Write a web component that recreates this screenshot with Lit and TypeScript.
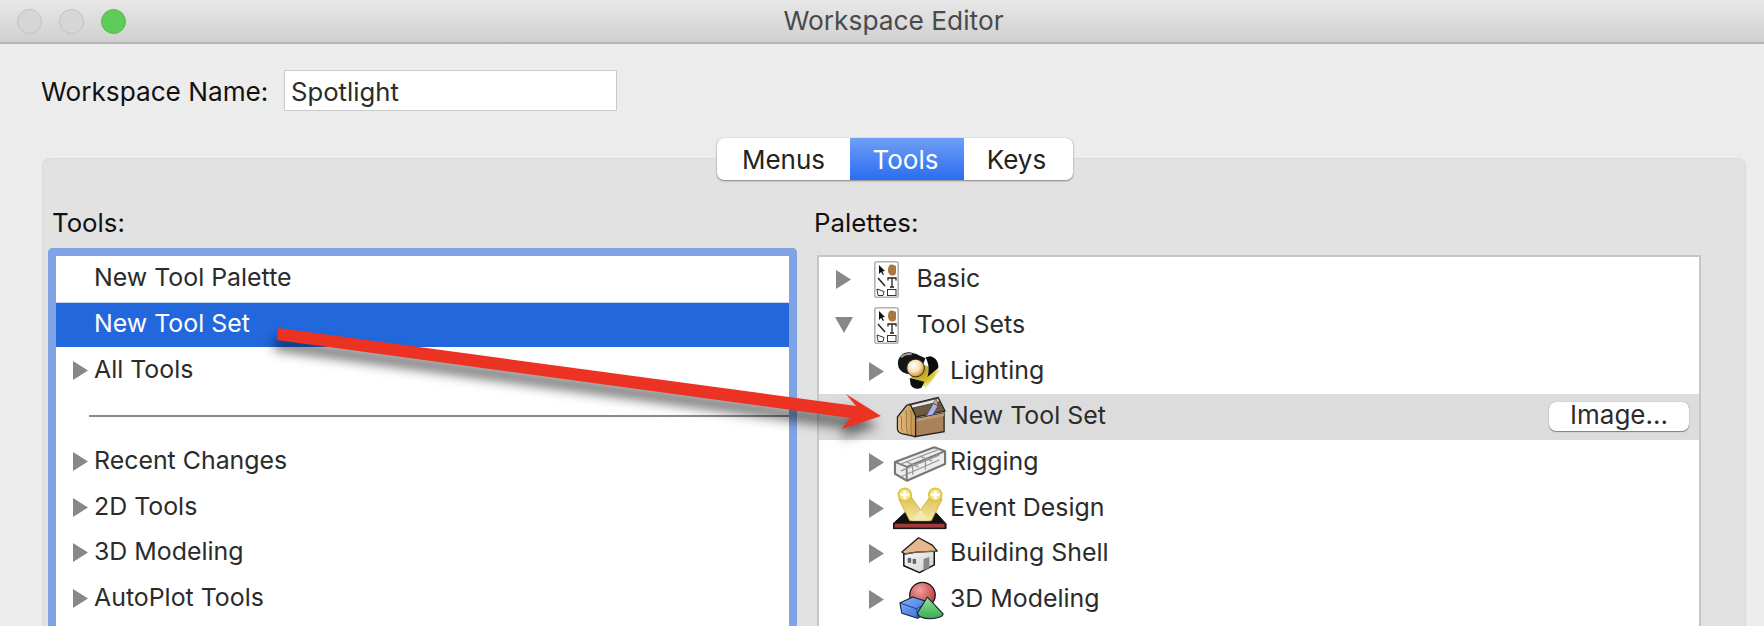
import { LitElement, html, css, svg } from "lit";
import { customElement } from "lit/decorators.js";

const doc = svg`<svg class="doc" width="25" height="37" viewBox="0 0 25 37">
<rect x=".8" y=".8" width="23.4" height="35.4" rx="2" fill="#fff" stroke="#b2b2b2" stroke-width="1.6"/>
<path d="M5 4l0 9 2-2 2 3 1-.6-1.7-3 2.700-.4z" fill="#111"/>
<path d="M14 9c0-3 1-5.500 3-5.500s1.500 0 2.500.5 2.500 0 2.500 1.500v5c0 3-1 4-3.500 4s-4.500-2-4.500-5.500z" fill="#a9773f"/>
<path d="M4 17l7 8" stroke="#222" stroke-width="1.500"/>
<path d="M14 19.500V17h8v2.500M18 17v9M16 26h4" fill="none" stroke="#222" stroke-width="1.300"/>
<path d="M3 28l7 2.500-1 4H4z" fill="none" stroke="#333"/>
<rect x="13.500" y="28.500" width="8.500" height="6" fill="none" stroke="#333"/></svg>`;

const tri = (down = false) =>
  down
    ? svg`<svg class="tri" width="18" height="16" viewBox="0 0 18 16"><path d="M0 0h18L9 16z" fill="#888"/></svg>`
    : svg`<svg class="tri" width="15" height="19" viewBox="0 0 15 19"><path d="M0 0l15 9.500L0 19z" fill="#888"/></svg>`;

const lighting = svg`<svg class="ic" width="58" height="46" viewBox="0 0 58 46">
<defs><radialGradient id="glow" cx=".3" cy=".35" r=".8"><stop offset="0" stop-color="#a8941a"/><stop offset=".6" stop-color="#d8c93a"/><stop offset="1" stop-color="#f7f1b0" stop-opacity=".35"/></radialGradient>
<radialGradient id="lens" cx=".4" cy=".35" r=".7"><stop offset="0" stop-color="#fff"/><stop offset=".5" stop-color="#f6e2b8"/><stop offset="1" stop-color="#d07f1c"/></radialGradient></defs>
<path d="M22 14l26 8-14 18-16-8z" fill="url(#glow)"/>
<path d="M33 9l5-1c5 1 9 6 8 12l-11 9c2-6 2-13-2-20z" fill="#0b0b0b"/>
<path d="M17 30l15 4-3 6c-4 2-9 1-11-3z" fill="#0e0e0e"/>
<circle cx="16" cy="15" r="11" fill="#151515"/>
<path d="M8 9c3-3 7-4 11-3" stroke="#9a9a9a" stroke-width="2" fill="none"/>
<path d="M22 5l11 5-3 8-12-4z" fill="#111"/>
<circle cx="23" cy="20" r="9" fill="url(#lens)" stroke="#2a2a2a" stroke-width="1"/></svg>`;

const toolbox = svg`<svg class="ic" width="58" height="46" viewBox="0 0 58 46">
<defs><linearGradient id="wd" x1="0" y1="0" x2="1" y2="0"><stop offset="0" stop-color="#e2bd80"/><stop offset="1" stop-color="#c29654"/></linearGradient></defs>
<path d="M17 10L46 3l7 14-30 6z" fill="#6e5a3f" stroke="#222" stroke-width="1.200"/>
<path d="M17 11L46 4l1.500 3.500-28 6.500z" fill="#e8e8e8" stroke="#333" stroke-width=".8"/>
<path d="M32 25l9-16 5 2.500-8 14z" fill="#a9b0ee" stroke="#444" stroke-width=".8"/>
<path d="M41 9l3-5 2 7.500z" fill="#d8b48a" stroke="#333" stroke-width=".6"/>
<path d="M22 25l30-6v19l-30 5z" fill="#a9825a" stroke="#222" stroke-width="1.300"/>
<path d="M22 25l30-6v3l-30 6z" fill="#bd9a72"/>
<path d="M4.500 23L14 11c2-1 3-1 4 0l5 11v21l-14-3c-3-1-4.500-3-4.500-5z" fill="url(#wd)" stroke="#222" stroke-width="1.300" stroke-linejoin="round"/>
<path d="M8 22c2 6-1 10 2 16M13 16c2 8-1 14 2 24M18 16c2 8-1 16 1 25" fill="none" stroke="#a3763a" stroke-width="1"/></svg>`;

const rigging = svg`<svg class="ic" width="58" height="46" viewBox="0 0 58 46" fill="none" stroke="#777">
<path d="M2 23L42 8l11 4v13L14 42 2 35z" fill="#ececec" stroke-width="2.200" stroke-linejoin="round"/>
<path d="M2 23l12 5L53 12M14 28v14" stroke-width="1.800"/>
<path d="M8 25L47 10M8 32l39-16M20 25v11M33 20v11M8 38L47 21M27 17l13 5M14 23l12 5" stroke-width="1.200" stroke="#959595"/></svg>`;

const eventDesign = svg`<svg class="ic" width="58" height="46" viewBox="0 0 58 46">
<defs><linearGradient id="bm" x1="0" y1="0" x2="0" y2="1"><stop offset="0" stop-color="#d9b93c"/><stop offset="1" stop-color="#f6e8a8"/></linearGradient></defs>
<path d="M14 26h28l12 13v5H0v-5z" fill="#111" stroke="#111" stroke-linejoin="round"/>
<rect x="1.500" y="39" width="51" height="4" fill="#a23a3a"/>
<path d="M6 14l9-7 13 18 13-18 9 7-11 22H17z" fill="url(#bm)" stroke="#c9a72c" stroke-width=".8"/>
<path d="M19 36l9-11 9 11z" fill="#f4e8b6"/>
<circle cx="12" cy="9.500" r="6.500" fill="#f4e59a" stroke="#e0c540" stroke-width="1.800"/>
<circle cx="43" cy="9.500" r="6.500" fill="#f4e59a" stroke="#e0c540" stroke-width="1.800"/>
<path d="M8 9.500h8M12 5.500v8M39 9.500h8M43 5.500v8" stroke="#fff" stroke-width="2.600"/></svg>`;

const house = svg`<svg class="ic" width="58" height="46" viewBox="0 0 58 46">
<defs><linearGradient id="wl" x1="0" y1="0" x2="1" y2="1"><stop offset="0" stop-color="#fff"/><stop offset="1" stop-color="#d0d0d0"/></linearGradient></defs>
<path d="M11 22v13l16 7 15-8V21L27 12z" fill="url(#wl)" stroke="#111" stroke-width="1.500" stroke-linejoin="round"/>
<path d="M26 6.500L9 21l3 2 12-2 21-1-5-6z" fill="#e6b88e" stroke="#1a1a1a" stroke-width="1.300" stroke-linejoin="round"/>
<path d="M12 23l12-2 19-1" stroke="#8a6a44" stroke-width="1.200" fill="none"/>
<rect x="15" y="27" width="3.500" height="5" fill="#666"/><rect x="20" y="28" width="3.500" height="5" fill="#666"/>
<path d="M31 28l6-2v11l-6 3z" fill="#888"/></svg>`;

const solid = svg`<svg class="ic" width="58" height="46" viewBox="0 0 58 46">
<defs><radialGradient id="sp" cx=".4" cy=".3" r=".8"><stop offset="0" stop-color="#f0a0a0"/><stop offset="1" stop-color="#b52a2a"/></radialGradient>
<linearGradient id="bx" x1="0" y1="0" x2="1" y2="1"><stop offset="0" stop-color="#86b4f4"/><stop offset="1" stop-color="#2f66d8"/></linearGradient>
<linearGradient id="cn" x1="0" y1="0" x2="0" y2="1"><stop offset="0" stop-color="#8fe59a"/><stop offset="1" stop-color="#3ba850"/></linearGradient></defs>
<circle cx="30" cy="18" r="13" fill="url(#sp)" stroke="#111" stroke-width="1.200"/>
<path d="M7 26l13-6 16 5-1 10-10 6.500-16-5z" fill="url(#bx)" stroke="#123" stroke-width="1.100" stroke-linejoin="round"/>
<path d="M7 26l17 6 12-7M24 32l1 9.500" fill="none" stroke="#1d3f90" stroke-width="1"/>
<path d="M35 20L25 36c0 4 6 6 13 6s13-2 13-5z" fill="url(#cn)" stroke="#123" stroke-width="1.100" stroke-linejoin="round"/></svg>`;

const leftRows: [string, boolean, string?][] = [
  ["New Tool Palette", false],
  ["New Tool Set", false, "sel"],
  ["All Tools", true],
  ["", false, "sep"],
  ["Recent Changes", true],
  ["2D Tools", true],
  ["3D Modeling", true],
  ["AutoPlot Tools", true],
];

const nested = [
  { t: "Lighting", i: lighting, tri: true },
  { t: "New Tool Set", i: toolbox, tri: false, on: true },
  { t: "Rigging", i: rigging, tri: true },
  { t: "Event Design", i: eventDesign, tri: true },
  { t: "Building Shell", i: house, tri: true },
  { t: "3D Modeling", i: solid, tri: true },
];

@customElement("app-root")
export class AppRoot extends LitElement {
  static styles = css`
    :host { display: block; width: 1764px; height: 626px; overflow: hidden; position: relative;
      font-family: "Inter", "Liberation Sans", sans-serif; color: #222; background: #ececec; }
    * { box-sizing: border-box; }
    .title { height: 44px; background: linear-gradient(#e8e8e8, #d0d0d0); border-bottom: 2px solid #b4b4b4;
      display: flex; align-items: center; position: relative; padding-left: 17px; gap: 17px; }
    .light { width: 25px; height: 25px; border-radius: 50%; background: #d6d6d6; border: 1px solid #c2c2c2; }
    .light.g { background: #5fcb58; border-color: #58bb51; }
    .title span { position: absolute; left: 0; right: 0; text-align: center; top: 6px; padding-left: 23px;
      font-size: 26.300px; color: #4a4a4a; line-height: 30px; }
    .name { display: flex; align-items: center; height: 41px; margin: 26px 0 0 41px; gap: 16px; font-size: 26.200px; color: #111; }
    .name label { width: 227px; white-space: nowrap; padding-top: 2px; }
    .name .inp { width: 333px; height: 41px; background: #fff; border: 1.500px solid #cacaca; display: flex;
      align-items: center; padding: 2px 0 0 6px; color: #2c2c2c; font-size: 25.700px; }
    .panel { position: relative; margin: 47px 18px 0 42px; height: 480px; background: #e2e2e2;
      border: 1px solid #dadada; border-bottom: 0; border-radius: 8px 8px 0 0; padding: 44px 0 0 5px;
      display: flex; }
    .seg { position: absolute; left: 674px; top: -21px; width: 356px; height: 42px; background: #fff; border-radius: 7px;
      box-shadow: 0 1px 2px rgba(0,0,0,.4), 0 0 1px rgba(0,0,0,.3); display: flex; overflow: hidden; font-size: 26px; }
    .seg div { display: flex; align-items: center; justify-content: center; color: #222; }
    .seg .a { width: 133px; }
    .seg .b { width: 114px; padding-right: 3px; color: #fff; background: linear-gradient(#6f9ff5, #2a6df2); }
    .seg .c { width: 109px; padding-right: 4px; }
    .col { display: flex; flex-direction: column; }
    .cap { font-size: 25.800px; height: 46px; line-height: 40px; color: #111; white-space: nowrap; }
    .left { width: 769px; } .left .cap { padding-left: 4px; } .right .cap { margin-left: -3px; }
    .list { background: #fff; overflow: hidden; font-size: 24.900px; color: #2b2b2b; }
    .lbox { width: 749px; height: 400px; border: 8px solid #7fa3e4; border-bottom: 0; border-radius: 5px 5px 0 0; }
    .rbox { width: 884px; height: 393px; margin-top: 7px; border: 2px solid #c6c6c6; border-bottom: 0; }
    .row { height: 45.700px; display: flex; align-items: center; position: relative; }
    .row span { margin-top: -3px; white-space: nowrap; }
    .lr { padding-left: 17px; }
    .lr .slot { width: 21px; flex: none; display: flex; }
    .lr.sel { background: #2367dc; color: #fff; border-top: 1px solid #c6d6f2; }
    .lr .rule { flex: 1; height: 2px; margin-left: 16px; background: #8a8a8a; }
    .l0 { padding-left: 17px; } .l0 .slot { width: 38px; flex: none; display: flex; } .l0 .icell { width: 42.500px; flex: none; display: flex; }
    .l0 .slot.d { margin-left: -1px; width: 39px; }
    .l1 { padding-left: 50px; } .l1 .slot { width: 24px; flex: none; display: flex; } .l1 .icell { width: 57px; flex: none; display: flex; }
    .l1.on { background: #dcdcdc; }
    .btn { position: absolute; left: 730px; top: 8px; width: 140px; height: 29px; background: #fff; border-radius: 7px;
      box-shadow: 0 1px 1px rgba(0,0,0,.4), 0 0 1px rgba(0,0,0,.35); text-align: center; line-height: 26px; font-size: 26px; }
    .arrow { position: absolute; left: 0; top: 0; pointer-events: none; filter: drop-shadow(-3px 10px 6px rgba(0,0,0,.55)); }
  `;

  render() {
    return html`
      <div class="title">
        <div class="light"></div><div class="light"></div><div class="light g"></div>
        <span>Workspace Editor</span>
      </div>
      <div class="name"><label>Workspace Name:</label><div class="inp">Spotlight</div></div>
      <div class="panel">
        <div class="seg"><div class="a">Menus</div><div class="b">Tools</div><div class="c">Keys</div></div>
        <div class="col left">
          <div class="cap">Tools:</div>
          <div class="list lbox">
            ${leftRows.map(([t, hasTri, k]) =>
              k === "sep"
                ? html`<div class="row lr"><div class="rule"></div></div>`
                : html`<div class="row lr ${k ?? ""}"><div class="slot">${hasTri ? tri() : ""}</div><span>${t}</span></div>`
            )}
          </div>
        </div>
        <div class="col right">
          <div class="cap">Palettes:</div>
          <div class="list rbox">
            <div class="row l0"><div class="slot">${tri()}</div><div class="icell">${doc}</div><span>Basic</span></div>
            <div class="row l0"><div class="slot d">${tri(true)}</div><div class="icell">${doc}</div><span>Tool Sets</span></div>
            ${nested.map(
              (n) => html`<div class="row l1 ${n.on ? "on" : ""}"><div class="slot">${n.tri ? tri() : ""}</div><div class="icell">${n.i}</div><span>${n.t}</span>${n.on ? html`<div class="btn">Image...</div>` : ""}</div>`
            )}
          </div>
        </div>
      </div>
      <svg class="arrow" width="1764" height="626" viewBox="0 0 1764 626">
        <path d="M278 328L856 406l-10-12 35 22-39 13 8-11L277 340z" fill="#eb3223"/>
      </svg>
    `;
  }
}
